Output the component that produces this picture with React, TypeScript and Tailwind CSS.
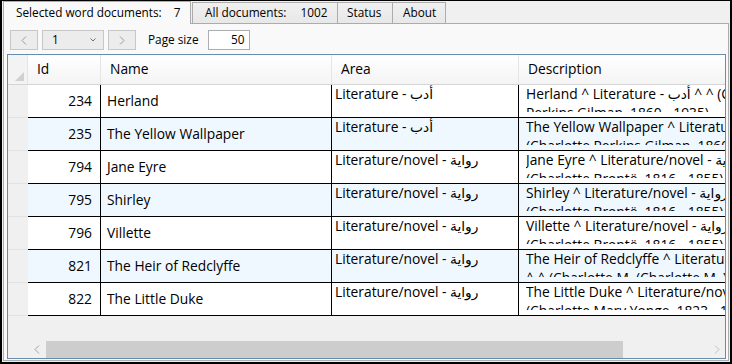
import React from "react";

type Row = { id: number; name: string; area: string; d1: string; d2: string };

const rows: Row[] = [
  { id: 234, name: "Herland", area: "Literature - أدب", d1: "Herland ^ Literature - أدب ^ ^ (Charlotte", d2: "Perkins Gilman, 1860 - 1935)" },
  { id: 235, name: "The Yellow Wallpaper", area: "Literature - أدب", d1: "The Yellow Wallpaper ^ Literature - أدب ^ ^", d2: "(Charlotte Perkins Gilman, 1860 - 1935)" },
  { id: 794, name: "Jane Eyre", area: "Literature/novel - رواية", d1: "Jane Eyre ^ Literature/novel - رواية ^ ^", d2: "(Charlotte Brontë, 1816 - 1855)" },
  { id: 795, name: "Shirley", area: "Literature/novel - رواية", d1: "Shirley ^ Literature/novel - رواية ^ ^", d2: "(Charlotte Brontë, 1816 - 1855)" },
  { id: 796, name: "Villette", area: "Literature/novel - رواية", d1: "Villette ^ Literature/novel - رواية ^ ^", d2: "(Charlotte Brontë, 1816 - 1855)" },
  { id: 821, name: "The Heir of Redclyffe", area: "Literature/novel - رواية", d1: "The Heir of Redclyffe ^ Literature/novel - رواية", d2: "^ ^ (Charlotte M. (Charlotte M. Yonge)" },
  { id: 822, name: "The Little Duke", area: "Literature/novel - رواية", d1: "The Little Duke ^ Literature/novel - رواية ^ ^", d2: "(Charlotte Mary Yonge, 1823 - 1901)" },
];

function Chevron({ dir, color }: { dir: "left" | "right"; color: string }) {
  return (
    <svg width="6" height="9" viewBox="0 0 6 9">
      {dir === "left" ? (
        <polyline points="5,0.5 1,4.5 5,8.5" fill="none" stroke={color} strokeWidth="1" />
      ) : (
        <polyline points="1,0.5 5,4.5 1,8.5" fill="none" stroke={color} strokeWidth="1" />
      )}
    </svg>
  );
}

export default function App() {
  return (
    <div className="w-[732px] h-[364px] bg-[#f0f0f0] border-t border-x-2 border-b-2 border-black flex flex-col overflow-hidden font-['Open_Sans','DejaVu_Sans',sans-serif] text-black">
      {/* Tabs */}
      <div className="h-[22px] shrink-0 flex items-end pl-[1px] relative z-10 text-[11.8px]">
        <div className="h-[23px] -mb-px w-[188px] bg-[#f9f9f9] border border-b-0 border-[#acacac] flex items-center pl-[12px] whitespace-nowrap">
          <span>Selected word documents:</span>
          <span className="ml-[12px]">7</span>
        </div>
        <div className="h-[21px] ml-[1px] w-[146px] bg-gradient-to-b from-[#f0f0f0] to-[#e8e8e8] border border-b-0 border-[#acacac] flex items-center pl-[12px] whitespace-nowrap">
          <span>All documents:</span>
          <span className="ml-[14px]">1002</span>
        </div>
        <div className="h-[21px] w-[55px] bg-gradient-to-b from-[#f0f0f0] to-[#e8e8e8] border border-l-0 border-b-0 border-[#acacac] flex items-center pl-[9px]">
          Status
        </div>
        <div className="h-[21px] w-[53px] bg-gradient-to-b from-[#f0f0f0] to-[#e8e8e8] border border-l-0 border-b-0 border-[#acacac] flex items-center pl-[10px]">
          About
        </div>
      </div>

      {/* Panel */}
      <div className="flex-1 mx-[1px] mb-[1px] border border-[#acacac] bg-[#f9f9f9] flex flex-col pt-[6px] pl-[3px] pr-[2px] pb-[1px] min-h-0">
        {/* Toolbar */}
        <div className="h-[20px] shrink-0 flex items-center ml-[3px] text-[11.8px]">
          <div className="w-[28px] h-[20px] border border-[#c7c7c7] bg-[#ececec] flex items-center justify-center">
            <Chevron dir="left" color="#9a9a9a" />
          </div>
          <div className="ml-[4px] w-[62px] h-[20px] border border-[#c7c7c7] bg-[#ececec] flex items-center justify-between pl-[9px] pr-[7px]">
            <span>1</span>
            <svg width="6" height="4" viewBox="0 0 6 4">
              <polyline points="0.5,0.5 3,3 5.5,0.5" fill="none" stroke="#707070" strokeWidth="1" />
            </svg>
          </div>
          <div className="ml-[4px] w-[28px] h-[20px] border border-[#c7c7c7] bg-[#ececec] flex items-center justify-center">
            <Chevron dir="right" color="#9a9a9a" />
          </div>
          <span className="ml-[12px]">Page size</span>
          <div className="ml-[9px] w-[42px] h-[20px] border border-[#abadb3] bg-white flex items-center justify-end pr-[4px]">
            50
          </div>
        </div>

        {/* Grid */}
        <div className="mt-[4px] flex-1 min-h-0 border border-[#688caf] bg-[#f0f0f0] flex flex-col overflow-hidden text-[13.8px]">
          {/* Header */}
          <div className="h-[30px] shrink-0 flex bg-gradient-to-b from-white to-[#f4f4f4] border-b border-[#d5d5d5]">
            <div className="w-[20px] shrink-0 bg-[#f3f3f3] border-r border-[#e5e5e5] flex items-end justify-end pr-[3px] pb-[3px]">
              <svg width="9" height="9" viewBox="0 0 9 9">
                <polygon points="9,0 9,9 0,9" fill="#d0d0d0" />
              </svg>
            </div>
            <div className="w-[73px] shrink-0 border-r border-[#e5e5e5] flex items-center pl-[9px]">Id</div>
            <div className="w-[231px] shrink-0 border-r border-[#e5e5e5] flex items-center pl-[9px]">Name</div>
            <div className="w-[187px] shrink-0 border-r border-[#e5e5e5] flex items-center pl-[9px]">Area</div>
            <div className="flex-1 flex items-center pl-[9px] whitespace-nowrap">Description</div>
          </div>

          {/* Rows */}
          {rows.map((r, i) => (
            <div key={r.id} className="h-[33px] shrink-0 flex">
              <div className="w-[20px] shrink-0 bg-[#f0f0f0] border-b border-[#e2e2e2]" />
              <div className={`flex-1 flex border-b border-black ${i % 2 === 1 ? "bg-[#f0f8ff]" : "bg-white"}`}>
                <div className="w-[73px] shrink-0 border-r border-black flex items-center justify-end pr-[8px]">{r.id}</div>
                <div className="w-[231px] shrink-0 border-r border-black flex items-center pl-[6px] whitespace-nowrap overflow-hidden">{r.name}</div>
                <div className="w-[187px] shrink-0 border-r border-black pl-[3px] whitespace-nowrap overflow-hidden">
                  <div className="-mt-[1px] leading-[19px]">{r.area}</div>
                </div>
                <div className="flex-1 min-w-0 pl-[7px]">
                  <div className="h-[27px] overflow-hidden whitespace-nowrap">
                    <div className="-mt-[1px] leading-[19px]">
                      <div>{r.d1}</div>
                      <div>{r.d2}</div>
                    </div>
                  </div>
                </div>
              </div>
            </div>
          ))}

          <div className="flex-1" />

          {/* Horizontal scrollbar */}
          <div className="h-[17px] shrink-0 flex pl-[20px]">
            <div className="w-[17px] shrink-0 flex items-center justify-center">
              <Chevron dir="left" color="#a0a0a0" />
            </div>
            <div className="flex-1 flex items-stretch pl-[1px]">
              <div className="w-[577px] bg-[#cdcdcd]" />
            </div>
            <div className="w-[17px] shrink-0 flex items-center justify-center">
              <Chevron dir="right" color="#c0c0c0" />
            </div>
          </div>
        </div>
      </div>
    </div>
  );
}
